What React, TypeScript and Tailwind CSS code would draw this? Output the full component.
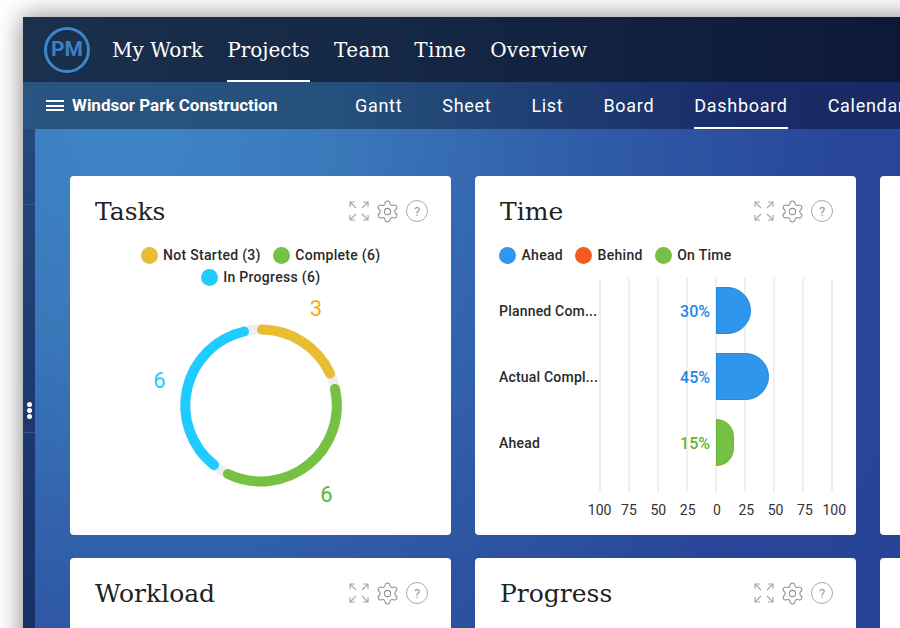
import { Settings } from "lucide-react";

const slab = "font-['DejaVu_Serif',serif]";

function ExpandIcon() {
  return (
    <svg width="22" height="22" viewBox="0 0 22 22" fill="none" stroke="#a9a9a9" strokeWidth="1.2">
      <path d="M8 8 L2 2 M2 7 V2 H7" />
      <path d="M14 8 L20 2 M15 2 H20 V7" />
      <path d="M8 14 L2 20 M2 15 V20 H7" />
      <path d="M14 14 L20 20 M20 15 V20 H15" />
    </svg>
  );
}

function CardHeader({ title }: { title: string }) {
  return (
    <div className="flex h-[68px] items-center justify-between pl-[25px] pr-[23px] pt-[4px]">
      <h2 className={`${slab} pb-[2px] text-[25px] font-normal leading-none text-[#222]`}>{title}</h2>
      <div className="-mt-[2px] flex items-center">
        <ExpandIcon />
        <Settings size={25} strokeWidth={1} className="ml-[5px] text-[#8f8f8f]" />
        <div className="ml-[6px] flex h-[22px] w-[22px] items-center justify-center rounded-full border border-[#aaa] text-[13px] leading-none text-[#999]">
          ?
        </div>
      </div>
    </div>
  );
}

function LegendItem({ color, label }: { color: string; label: string }) {
  return (
    <div className="flex items-center gap-[5.5px]">
      <span className="h-[17px] w-[17px] rounded-full" style={{ backgroundColor: color }} />
      <span className="text-[14px] font-medium leading-[22px] tracking-[0.3px] text-[#2a2a2a]">{label}</span>
    </div>
  );
}

function arc(x1: number, y1: number, x2: number, y2: number) {
  return `M${x1} ${y1} A76 76 0 0 1 ${x2} ${y2}`;
}

function TasksCard() {
  return (
    <div className="h-[359px] rounded-[4px] bg-white">
      <CardHeader title="Tasks" />
      <div className="flex flex-wrap justify-center gap-x-[12px] px-[30px]">
        <LegendItem color="#e8bd32" label="Not Started (3)" />
        <LegendItem color="#76c043" label="Complete (6)" />
        <LegendItem color="#1fcbff" label="In Progress (6)" />
      </div>
      <svg width="381" height="222" viewBox="0 0 381 222" className="mt-[8px] block" fontFamily="Roboto, sans-serif">
        <g transform="translate(-70 -296)">
          <circle cx="261" cy="405.5" r="76" fill="none" stroke="#eeeeee" strokeWidth="10" />
          <g fill="none" strokeWidth="10" strokeLinecap="round">
            <path d={arc(262, 329.5, 330, 373.5)} stroke="#e8bd32" />
            <path d={arc(335, 389, 228, 474)} stroke="#76c043" />
            <path d={arc(214, 465, 244, 331.5)} stroke="#1fcbff" />
          </g>
          <text x="316" y="316" textAnchor="middle" fontSize="22" fill="#f0b01e">3</text>
          <text x="159.5" y="388" textAnchor="middle" fontSize="22" fill="#1fcbff">6</text>
          <text x="326.5" y="502" textAnchor="middle" fontSize="22" fill="#5fb62c">6</text>
        </g>
      </svg>
    </div>
  );
}

const rows = [
  { label: "Planned Com...", pct: "30%", w: 35, color: "text-[#1e88e5]", bar: "bg-[#2f96eb] border-[#1f88e5]" },
  { label: "Actual Compl...", pct: "45%", w: 53, color: "text-[#1e88e5]", bar: "bg-[#2f96eb] border-[#1f88e5]" },
  { label: "Ahead", pct: "15%", w: 18, color: "text-[#5fb62c]", bar: "bg-[#76c043] border-[#6ab536]" },
];

const axis = ["100", "75", "50", "25", "0", "25", "50", "75", "100"];

function TimeCard() {
  return (
    <div className="h-[359px] rounded-[4px] bg-white">
      <CardHeader title="Time" />
      <div className="flex gap-x-[12px] pl-[24px]">
        <LegendItem color="#2f96eb" label="Ahead" />
        <LegendItem color="#f55a23" label="Behind" />
        <LegendItem color="#76c043" label="On Time" />
      </div>
      <div className="relative ml-[24px] mt-[12px] h-[214px]">
        <div className="absolute bottom-0 left-[100px] top-0 flex w-[234px] justify-between">
          {axis.map((_, i) => (
            <span key={i} className="h-full w-[2px] bg-[#efefef]" />
          ))}
        </div>
        <div className="relative flex flex-col gap-[19px] pt-[9px]">
          {rows.map((r) => (
            <div key={r.label} className="flex h-[47px] items-center">
              <span className="w-[100px] whitespace-nowrap pt-[2px] text-[14px] font-medium tracking-[0.2px] text-[#2a2a2a]">{r.label}</span>
              <span className={`w-[117px] pr-[6px] pt-[2px] text-right text-[16px] font-medium ${r.color}`}>{r.pct}</span>
              <div className={`h-[47px] rounded-r-[24px] border ${r.bar}`} style={{ width: r.w }} />
            </div>
          ))}
        </div>
      </div>
      <div className="ml-[110px] mt-[9px] flex w-[264px] justify-between text-[14px] leading-[18px] text-[#333]">
        {axis.map((a, i) => (
          <span key={i} className="w-[30px] text-center">{a}</span>
        ))}
      </div>
    </div>
  );
}

function TitledCard({ title }: { title: string }) {
  return (
    <div className="h-[359px] rounded-[4px] bg-white">
      <CardHeader title={title} />
    </div>
  );
}

function BlankCard() {
  return <div className="h-[359px] rounded-[4px] bg-white" />;
}

const top = [
  { t: "My Work", track: "tracking-normal" },
  { t: "Projects", track: "tracking-normal" },
  { t: "Team", track: "tracking-[0.4px]" },
  { t: "Time", track: "tracking-[0.3px]" },
  { t: "Overview", track: "tracking-[0.15px]" },
];
const sub = ["Gantt", "Sheet", "List", "Board", "Dashboard", "Calendar"];

export default function App() {
  return (
    <div className="h-[628px] w-[900px] overflow-hidden bg-white pl-[23px] pt-[17px] font-['Roboto',sans-serif]">
      <div className="flex h-[640px] w-[900px] flex-col shadow-[0_0_24px_rgba(0,0,0,0.5)]">
        <header className="flex h-[65px] shrink-0 items-stretch bg-[linear-gradient(90deg,#1a304c_0%,#152845_40%,#0d1838_100%)] pl-[21px]">
          <div className="my-auto flex h-[46px] w-[46px] items-center justify-center rounded-full border-[3px] border-[#3f86c8] text-[21px] font-bold leading-none text-[#3a82c4]">
            PM
          </div>
          <nav className="ml-[22px] flex gap-[24.2px]">
            {top.map(({ t, track }) => (
              <a
                key={t}
                className={`${slab} ${track} flex items-center whitespace-nowrap border-b-2 pt-[2px] text-[20px] text-white ${t === "Projects" ? "border-white" : "border-transparent"}`}
              >
                {t}
              </a>
            ))}
          </nav>
        </header>
        <div className="flex h-[47px] shrink-0 items-stretch bg-[linear-gradient(90deg,#2a5580_0%,#25507c_35%,#192c68_80%,#182a62_100%)] pl-[23px]">
          <div className="flex w-[309px] shrink-0 items-center">
            <div className="flex h-[11px] w-[18px] flex-col justify-between">
              <span className="h-[2px] bg-white" />
              <span className="h-[2px] bg-white" />
              <span className="h-[2px] bg-white" />
            </div>
            <span className="ml-[8px] whitespace-nowrap text-[17px] font-bold text-white">Windsor Park Construction</span>
          </div>
          <nav className="flex gap-[40px]">
            {sub.map((t) => (
              <a
                key={t}
                className={`flex items-center whitespace-nowrap border-b-2 pt-[2px] text-[18px] tracking-[0.7px] text-white ${t === "Dashboard" ? "border-white" : "border-transparent"}`}
              >
                {t}
              </a>
            ))}
          </nav>
        </div>
        <div className="flex min-h-0 flex-1">
          <aside className="flex w-[12px] shrink-0 flex-col bg-[linear-gradient(180deg,#24497c_0%,#1d3a70_50%,#182f66_100%)]">
            <div className="h-[76px] border-b border-[#2d5a96]" />
            <div className="flex h-[228px] flex-col items-center justify-end gap-[1px] border-b border-[#2d5a96] pb-[13px]">
              <span className="h-[5px] w-[5px] rounded-full bg-white" />
              <span className="h-[5px] w-[5px] rounded-full bg-white" />
              <span className="h-[5px] w-[5px] rounded-full bg-white" />
            </div>
          </aside>
          <main className="grid flex-1 grid-cols-[381px_381px_381px] content-start gap-x-[24px] gap-y-[23px] overflow-hidden bg-[radial-gradient(circle_at_95px_0px,#3f86c6_0%,#3a78ba_22%,#2f5aa6_50%,#284699_75%,#274294_100%)] pl-[35px] pt-[47px]">
            <TasksCard />
            <TimeCard />
            <BlankCard />
            <TitledCard title="Workload" />
            <TitledCard title="Progress" />
            <BlankCard />
          </main>
        </div>
      </div>
    </div>
  );
}
